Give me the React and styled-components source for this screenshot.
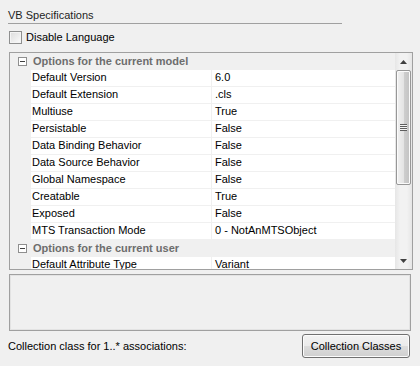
import React from "react";
import styled, { createGlobalStyle } from "styled-components";

const rows1 = [
  ["Default Version", "6.0"],
  ["Default Extension", ".cls"],
  ["Multiuse", "True"],
  ["Persistable", "False"],
  ["Data Binding Behavior", "False"],
  ["Data Source Behavior", "False"],
  ["Global Namespace", "False"],
  ["Creatable", "True"],
  ["Exposed", "False"],
  ["MTS Transaction Mode", "0 - NotAnMTSObject"],
];

const rows2 = [["Default Attribute Type", "Variant"]];

const App = () => {
  return (
    <Page>
      <Global />
      <Title>VB Specifications</Title>
      <CheckRow>
        <CheckBox />
        <span>Disable Language</span>
      </CheckRow>
      <Grid>
        <Rows>
          <Category title="Options for the current model" />
          {rows1.map(([name, value]) => (
            <Row key={name}>
              <Margin />
              <NameCell>{name}</NameCell>
              <ValueCell>{value}</ValueCell>
            </Row>
          ))}
          <Category title="Options for the current user" />
          {rows2.map(([name, value]) => (
            <Row key={name}>
              <Margin />
              <NameCell>{name}</NameCell>
              <ValueCell>{value}</ValueCell>
            </Row>
          ))}
        </Rows>
        <ScrollBar>
          <Arrow>
            <svg width="7" height="4" viewBox="0 0 7 4">
              <path d="M3.5 0 L7 4 L0 4 Z" fill="#404040" />
            </svg>
          </Arrow>
          <Track>
            <Thumb>
              <Grip />
            </Thumb>
          </Track>
          <Arrow>
            <svg width="7" height="4" viewBox="0 0 7 4">
              <path d="M0 0 L7 0 L3.5 4 Z" fill="#404040" />
            </svg>
          </Arrow>
        </ScrollBar>
      </Grid>
      <Description />
      <Footer>
        <span>Collection class for 1..* associations:</span>
        <Button>Collection Classes</Button>
      </Footer>
    </Page>
  );
};

const Category = ({ title }) => (
  <CatRow>
    <Toggle>
      <svg width="9" height="9" viewBox="0 0 9 9">
        <rect x="0.5" y="0.5" width="8" height="8" fill="#fff" stroke="#8f8f8f" />
        <path d="M2 4.5 H7" stroke="#404040" />
      </svg>
    </Toggle>
    <CatTitle>{title}</CatTitle>
  </CatRow>
);

//STYLING

const Global = createGlobalStyle`
  body {
    margin: 0;
    background: #f0f0f0;
  }
`;

const Page = styled.div`
  width: 420px;
  height: 366px;
  box-sizing: border-box;
  padding: 9px 0 0 8px;
  background: #f0f0f0;
  font-family: "Liberation Sans", Arial, sans-serif;
  font-size: 11px;
  color: #000;
  overflow: hidden;
`;

const Title = styled.div`
  width: 334px;
  height: 13px;
  line-height: 13px;
  padding-bottom: 1px;
  border-bottom: 1px solid #a0a0a0;
  color: #1e1e1e;
`;

const CheckRow = styled.div`
  display: flex;
  align-items: center;
  gap: 4px;
  margin-top: 7px;
  height: 13px;
  padding-left: 1px;
  line-height: 13px;
`;

const CheckBox = styled.span`
  width: 11px;
  height: 11px;
  border: 1px solid #8e8f8f;
  background: linear-gradient(135deg, #dcdcdc, #fbfbfb);
  box-shadow: inset 0 0 0 1px #f4f4f4;
`;

const Grid = styled.div`
  display: flex;
  margin: 8px 0 0 1px;
  width: 404px;
  height: 218px;
  box-sizing: border-box;
  border: 1px solid #a0a0a0;
  background: #fff;
  overflow: hidden;
`;

const Rows = styled.div`
  flex: 1;
  overflow: hidden;
`;

const CatRow = styled.div`
  display: flex;
  align-items: center;
  height: 17px;
  background: #f0f0f0;
`;

const Toggle = styled.span`
  display: flex;
  width: 22px;
  justify-content: center;
  padding-left: 1px;
`;

const CatTitle = styled.span`
  font-weight: bold;
  color: #6d6d6d;
  line-height: 15px;
  margin-top: -1px;
`;

const Row = styled.div`
  display: grid;
  grid-template-columns: 21px 181px 1fr;
  height: 17px;
`;

const Margin = styled.div`
  background: #f0f0f0;
`;

const NameCell = styled.div`
  padding-left: 1px;
  line-height: 15px;
  border-bottom: 1px solid #f0f0f0;
  border-right: 1px solid #f0f0f0;
  white-space: nowrap;
  overflow: hidden;
`;

const ValueCell = styled.div`
  padding-left: 3px;
  line-height: 15px;
  border-bottom: 1px solid #f0f0f0;
  white-space: nowrap;
  overflow: hidden;
`;

const ScrollBar = styled.div`
  display: flex;
  flex-direction: column;
  width: 17px;
  background: linear-gradient(90deg, #e6e6e6, #f2f2f2 30%, #f2f2f2 70%, #e6e6e6);
`;

const Arrow = styled.div`
  display: flex;
  align-items: center;
  justify-content: center;
  height: 17px;
`;

const Track = styled.div`
  flex: 1;
  padding: 0 0 0 1px;
`;

const Thumb = styled.div`
  display: flex;
  align-items: center;
  justify-content: center;
  width: 15px;
  height: 115px;
  box-sizing: border-box;
  border: 1px solid #979797;
  border-radius: 2px;
  background: linear-gradient(90deg, #f1f1f1, #e4e4e4 50%, #cfcfcf 51%, #c2c2c2);
  box-shadow: inset 0 0 0 1px #fbfbfb;
`;

const Grip = styled.div`
  width: 7px;
  height: 7px;
  background: repeating-linear-gradient(
    180deg,
    #5e5e5e 0 1px,
    #f4f4f4 1px 2px
  );
`;

const Description = styled.div`
  margin: 4px 0 0 1px;
  width: 402px;
  height: 57px;
  box-sizing: border-box;
  border: 1px solid #a0a0a0;
  box-shadow: inset 0 0 0 1px #e3e3e3;
`;

const Footer = styled.div`
  display: flex;
  align-items: center;
  justify-content: space-between;
  width: 402px;
  margin-top: 3px;
  height: 24px;
`;

const Button = styled.button`
  width: 108px;
  height: 24px;
  padding: 0;
  border: 1px solid #707070;
  border-radius: 3px;
  background: linear-gradient(180deg, #f2f2f2, #ebebeb 50%, #dddddd 51%, #cfcfcf);
  box-shadow: inset 0 0 0 1px #fcfcfc;
  font-family: "Liberation Sans", Arial, sans-serif;
  font-size: 11px;
  color: #000;
`;

export default App;
